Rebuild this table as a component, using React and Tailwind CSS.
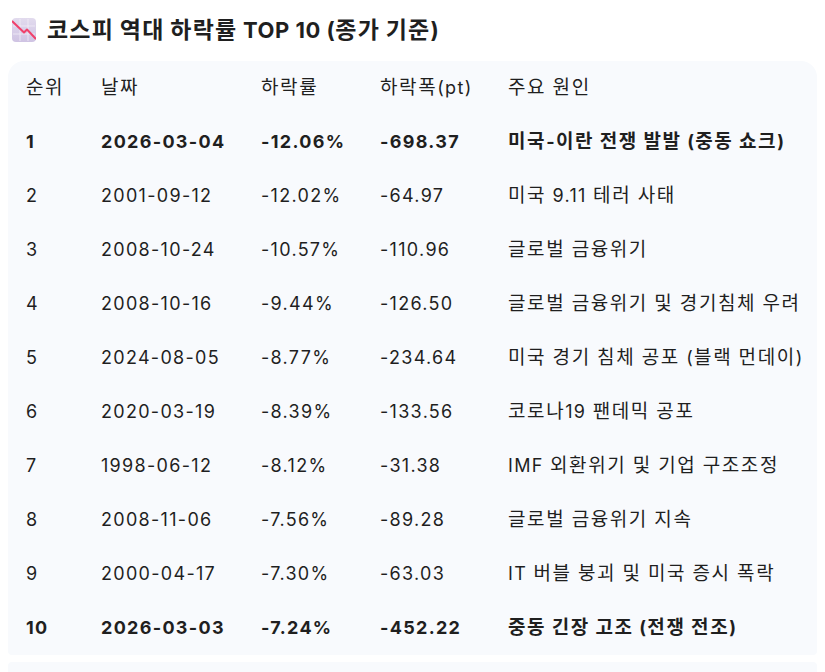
import React from 'react';

const rows = [
  { rank: '1', date: '2026-03-04', rate: '-12.06%', pt: '-698.37', cause: '미국-이란 전쟁 발발 (중동 쇼크)', bold: true },
  { rank: '2', date: '2001-09-12', rate: '-12.02%', pt: '-64.97', cause: '미국 9.11 테러 사태' },
  { rank: '3', date: '2008-10-24', rate: '-10.57%', pt: '-110.96', cause: '글로벌 금융위기' },
  { rank: '4', date: '2008-10-16', rate: '-9.44%', pt: '-126.50', cause: '글로벌 금융위기 및 경기침체 우려' },
  { rank: '5', date: '2024-08-05', rate: '-8.77%', pt: '-234.64', cause: '미국 경기 침체 공포 (블랙 먼데이)' },
  { rank: '6', date: '2020-03-19', rate: '-8.39%', pt: '-133.56', cause: '코로나19 팬데믹 공포' },
  { rank: '7', date: '1998-06-12', rate: '-8.12%', pt: '-31.38', cause: 'IMF 외환위기 및 기업 구조조정' },
  { rank: '8', date: '2008-11-06', rate: '-7.56%', pt: '-89.28', cause: '글로벌 금융위기 지속' },
  { rank: '9', date: '2000-04-17', rate: '-7.30%', pt: '-63.03', cause: 'IT 버블 붕괴 및 미국 증시 폭락' },
  { rank: '10', date: '2026-03-03', rate: '-7.24%', pt: '-452.22', cause: '중동 긴장 고조 (전쟁 전조)', bold: true },
];

// hangul runs are set a bit larger and wider than latin / digits
const Ko = ({ text, wide = 'text-[19px] tracking-[1.6px]' }) =>
  text.split(/([\uAC00-\uD7A3]+)/).map((s, i) =>
    /[\uAC00-\uD7A3]/.test(s) ? <span key={i} className={wide}>{s}</span> : s
  );

const ChartDownIcon = () => (
  <svg width="24" height="24" viewBox="0 0 24 24" className="shrink-0">
    <defs>
      <linearGradient id="cdbg" x1="0" y1="0" x2="0" y2="1">
        <stop offset="0" stopColor="#e2dbee" />
        <stop offset="1" stopColor="#cfc3e3" />
      </linearGradient>
    </defs>
    <rect x="0" y="0" width="24" height="24" rx="4" fill="url(#cdbg)" />
    <g stroke="#f1edf7" strokeWidth="0.8">
      <line x1="8" y1="1" x2="8" y2="23" />
      <line x1="16" y1="1" x2="16" y2="23" />
      <line x1="1" y1="8" x2="23" y2="8" />
      <line x1="1" y1="16" x2="23" y2="16" />
    </g>
    <path d="M0.5 3.5 L12 14.5 L15 11.5 L23.5 20.5" fill="none" stroke="#f0416b" strokeWidth="2" strokeLinecap="round" strokeLinejoin="round" />
  </svg>
);

const cols = 'grid grid-cols-[75px_160px_119px_128px_1fr] pl-[18px] items-center h-[54px]';

export default function App() {
  return (
    <div className="w-[825px] h-[672px] overflow-hidden bg-white text-[#1f1f1f] font-['Inter','Noto_Sans_CJK_KR',sans-serif]">
      <div className="flex items-center gap-[11px] pl-3 h-[61px] pb-[1px]">
        <ChartDownIcon />
        <h2 className="text-[22px] leading-[30px] font-bold tracking-[0.5px] whitespace-nowrap">
          <Ko text="코스피 역대 하락률 TOP 10 (종가 기준)" wide="text-[23px] tracking-[1.2px]" />
        </h2>
      </div>
      <div className="mx-2 bg-[#f8fafd] rounded-t-2xl rounded-b-[4px] text-[18px] leading-[26px] tracking-[1.3px]">
        <div className={cols}>
          <div><Ko text="순위" /></div>
          <div><Ko text="날짜" /></div>
          <div><Ko text="하락률" /></div>
          <div><Ko text="하락폭(pt)" /></div>
          <div><Ko text="주요 원인" /></div>
        </div>
        {rows.map((r) => (
          <div key={r.rank} className={`${cols} ${r.bold ? 'font-bold' : ''}`}>
            <div>{r.rank}</div>
            <div>{r.date}</div>
            <div>{r.rate}</div>
            <div>{r.pt}</div>
            <div className="whitespace-nowrap"><Ko text={r.cause} /></div>
          </div>
        ))}
      </div>
      <div className="mx-2 mt-[7px] h-[40px] bg-[#f8fafd] rounded-[4px]" />
    </div>
  );
}
